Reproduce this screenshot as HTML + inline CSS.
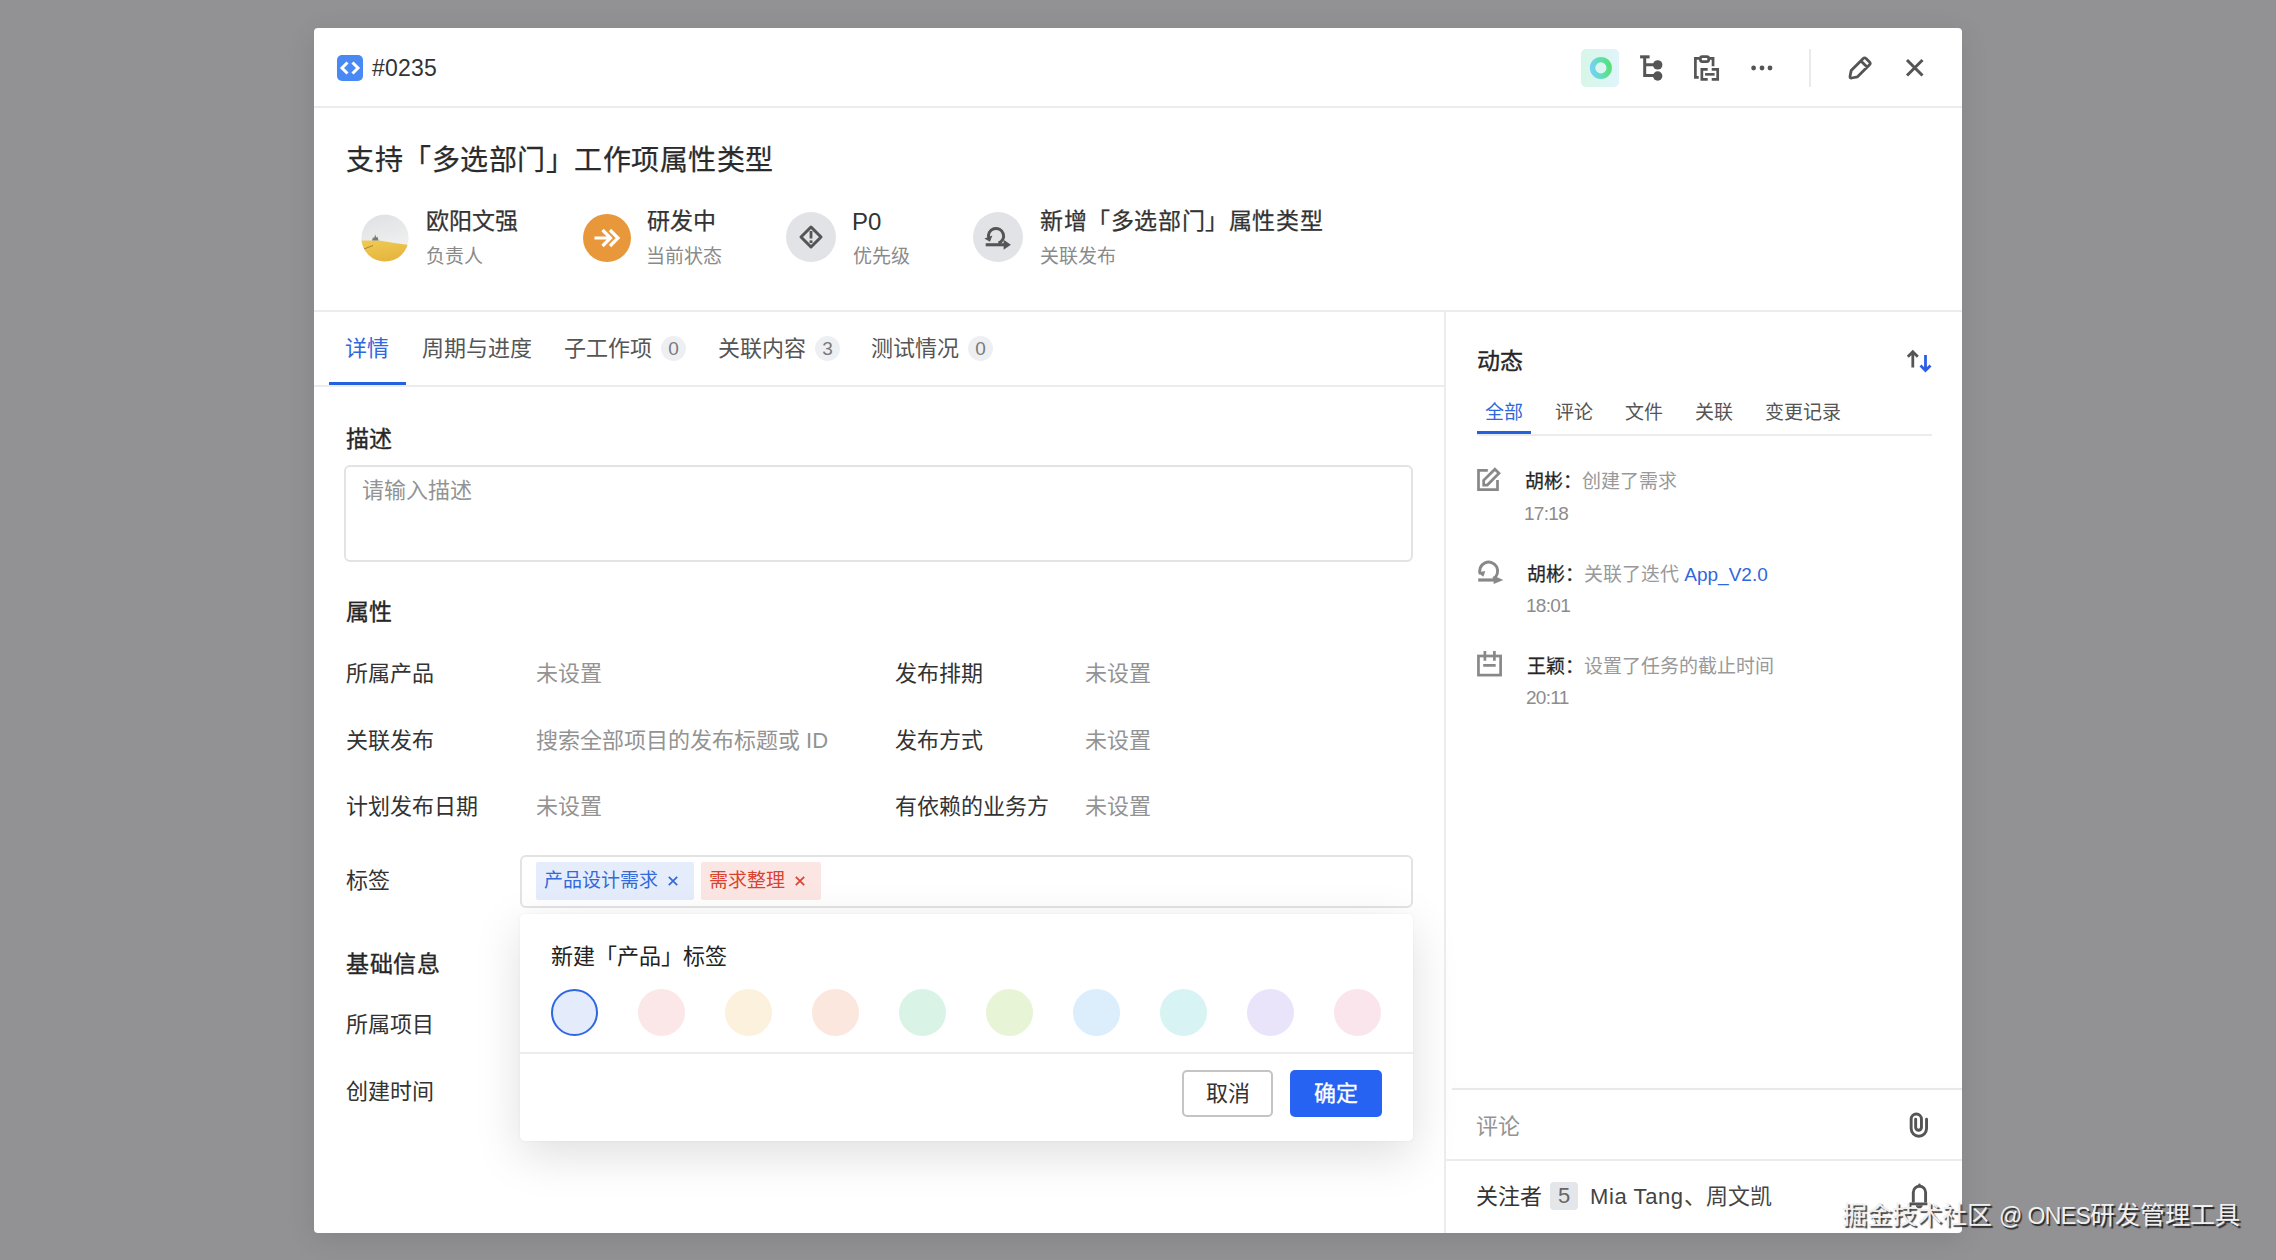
<!DOCTYPE html>
<html lang="zh-CN">
<head>
<meta charset="utf-8">
<title>#0235</title>
<style>
html,body{margin:0;padding:0;}
body{width:2276px;height:1260px;overflow:hidden;background:#929294;position:relative;font-family:"Liberation Sans",sans-serif;color:#303030;}
.a{position:absolute;white-space:nowrap;}
.modal{position:absolute;left:314px;top:28px;width:1648px;height:1205px;background:#fff;border-radius:4px;box-shadow:0 6px 28px rgba(0,0,0,0.10);}
.hl{position:absolute;height:2px;background:#ECECEC;}
.vl{position:absolute;width:2px;background:#ECECEC;}
.t19{font-size:19px;line-height:19px;}
.t20{font-size:20px;line-height:20px;}
.t22{font-size:22px;line-height:22px;}
.t23{font-size:23px;line-height:23px;}
.t24{font-size:24px;line-height:24px;}
.t28{font-size:28px;line-height:28px;}
.dark{color:#333333;}
.gray{color:#8A8A8A;}
.ph{color:#939393;}
.blue{color:#2F67DC;}
.med{-webkit-text-stroke:0.35px currentColor;}
.badge{position:absolute;width:25px;height:25px;border-radius:50%;background:#EEEFF2;color:#7A7A7A;font-size:19px;line-height:25px;text-align:center;}
.dot{position:absolute;width:47px;height:47px;border-radius:50%;top:989px;}
svg{position:absolute;overflow:visible;}
</style>
</head>
<body>
<div class="modal"></div>

<!-- ===== HEADER ===== -->
<div class="a" style="left:337px;top:55px;width:26px;height:26px;background:#4A88F4;border-radius:5px;"></div>
<svg style="left:337px;top:55px" width="26" height="26" viewBox="0 0 26 26"><path d="M10.5 7.5 L5 13 L10.5 18.5 M15.5 7.5 L21 13 L15.5 18.5" fill="none" stroke="#fff" stroke-width="3"/></svg>
<div class="a" style="left:372px;top:55px;font-size:23px;line-height:26px;color:#333;letter-spacing:0.2px;">#0235</div>

<div class="a" style="left:1581px;top:49px;width:38px;height:38px;border-radius:5px;background:linear-gradient(90deg,#D6F7E8,#E0F4FA);"></div>
<svg style="left:1581px;top:49px" width="38" height="38" viewBox="0 0 38 38"><defs><linearGradient id="rg" x1="0" y1="0.6" x2="1" y2="0.4"><stop offset="0" stop-color="#72D3F0"/><stop offset="0.5" stop-color="#62DDB4"/><stop offset="1" stop-color="#58E07E"/></linearGradient></defs><circle cx="19.9" cy="18.9" r="8.3" fill="none" stroke="url(#rg)" stroke-width="5.4"/></svg>

<svg style="left:1634px;top:50px" width="34" height="36" viewBox="0 0 34 36"><path d="M6.1 6.85 H15.6" stroke="#555" stroke-width="3.1" fill="none"/><path d="M10.7 6.85 V25.4 H21 M10.7 14.7 H21" fill="none" stroke="#555" stroke-width="3"/><circle cx="23.7" cy="14.9" r="4.7" fill="#555"/><circle cx="23.7" cy="26" r="4.7" fill="#555"/></svg>

<svg style="left:1688px;top:50px" width="36" height="36" viewBox="0 0 36 36"><path d="M10.7 27.45 H7.4 V8.4 H11.5 M21.6 8.4 H25.05 V16.3" fill="none" stroke="#555" stroke-width="2.7"/><rect x="12.4" y="6.6" width="8.3" height="5" rx="1.8" fill="none" stroke="#555" stroke-width="2.7"/><path d="M19.7 19.45 H13.85 V29.4 H19.7 M23.7 19.45 H29.7 V29.4 H23.7" fill="none" stroke="#555" stroke-width="2.7"/><path d="M17.1 24.35 H26.6" stroke="#555" stroke-width="2.6"/></svg>

<svg style="left:1750px;top:64px" width="24" height="8" viewBox="0 0 24 8"><circle cx="3.6" cy="4" r="2.4" fill="#555"/><circle cx="12" cy="4" r="2.4" fill="#555"/><circle cx="20" cy="4" r="2.4" fill="#555"/></svg>

<div class="vl" style="left:1809px;top:49px;height:38px;background:#EAEAEA;width:2px;"></div>

<svg style="left:1846px;top:54px" width="28" height="28" viewBox="0 0 28 28"><path d="M4 22.5 L5.2 16.5 L17.2 4.5 Q18.6 3.1 20 4.5 L23.5 8 Q24.9 9.4 23.5 10.8 L11.5 22.8 L5.5 24 Q3.8 24.2 4 22.5 Z M15 7 L21 13" fill="none" stroke="#555" stroke-width="2.8" stroke-linejoin="round"/></svg>

<svg style="left:1902px;top:56px" width="24" height="24" viewBox="0 0 24 24"><path d="M5 4 L20.5 19.5 M20.5 4 L5 19.5" fill="none" stroke="#555" stroke-width="3"/></svg>

<div class="hl" style="left:314px;top:106px;width:1648px;"></div>

<!-- ===== TITLE & META ===== -->
<div class="a t28" style="left:346px;top:147px;color:#2B2B2B;letter-spacing:0.5px;-webkit-text-stroke:0.25px #2B2B2B;">支持「多选部门」工作项属性类型</div>

<!-- avatar -->
<svg style="left:361px;top:214px" width="48" height="48" viewBox="0 0 48 48">
<defs>
<clipPath id="ac"><circle cx="24" cy="24" r="23.6"/></clipPath>
<linearGradient id="sky" x1="0" y1="0" x2="0.3" y2="1"><stop offset="0" stop-color="#DDE0E3"/><stop offset="1" stop-color="#F3F3F1"/></linearGradient>
<linearGradient id="fld" x1="0" y1="0" x2="0.4" y2="1"><stop offset="0" stop-color="#EFCB55"/><stop offset="1" stop-color="#E6B53E"/></linearGradient>
</defs>
<g clip-path="url(#ac)">
<rect x="0" y="0" width="48" height="48" fill="url(#sky)"/>
<path d="M0 26.5 L18 26.5 Q32 29 48 31 V48 H0 Z" fill="url(#fld)"/>
<path d="M3 35 L12 31.5" stroke="#A8832F" stroke-width="1" fill="none"/>
<path d="M11 26.5 L12 23 L13 24.5 L14.2 20.5 L15.2 23.5 L16.5 22.8 L17.5 26.5 Z" fill="#7C7772"/>
</g>
</svg>
<div class="a t23 dark" style="-webkit-text-stroke:0.25px #333;left:426px;top:210px;">欧阳文强</div>
<div class="a t19 gray" style="left:426px;top:247px;">负责人</div>

<!-- status -->
<div class="a" style="left:583px;top:214px;width:48px;height:48px;border-radius:50%;background:#E8983A;"></div>
<svg style="left:583px;top:214px" width="48" height="48" viewBox="0 0 48 48"><path d="M11.5 24 H26 M19.5 16 L27.5 24 L19.5 32 M27 16 L35 24 L27 32" fill="none" stroke="#fff" stroke-width="3.2"/></svg>
<div class="a t23 dark" style="-webkit-text-stroke:0.25px #333;left:647px;top:210px;">研发中</div>
<div class="a t19 gray" style="left:646px;top:247px;">当前状态</div>

<!-- priority -->
<div class="a" style="left:786px;top:212px;width:50px;height:50px;border-radius:50%;background:#E2E3E7;"></div>
<svg style="left:786px;top:212px" width="50" height="50" viewBox="0 0 50 50"><path d="M25 15 L35 25 L25 35 L15 25 Z" fill="none" stroke="#555" stroke-width="3" stroke-linejoin="round"/><path d="M25 19 V26.5" stroke="#555" stroke-width="2.8"/><rect x="23.6" y="28.4" width="2.8" height="2.6" fill="#555"/></svg>
<div class="a t24 dark" style="left:852px;top:210px;">P0</div>
<div class="a t19 gray" style="left:853px;top:247px;">优先级</div>

<!-- release -->
<div class="a" style="left:973px;top:212px;width:50px;height:50px;border-radius:50%;background:#E2E3E7;"></div>
<svg style="left:973px;top:212px" width="50" height="50" viewBox="0 0 50 50"><path d="M12.7 32.75 H32" stroke="#555" stroke-width="3.1" fill="none"/><path d="M30.6 27.8 L37.9 32.7 L30.6 37.7 Z" fill="#555"/><path d="M25.45 31.2 A7.6 7.6 0 1 0 15.7 26.1" fill="none" stroke="#555" stroke-width="3"/><path d="M19.4 23.6 L11.4 26.5 L16.9 29.8 Z" fill="#555"/></svg>
<div class="a t23 dark" style="-webkit-text-stroke:0.25px #333;left:1040px;top:210px;letter-spacing:0.6px;">新增「多选部门」属性类型</div>
<div class="a t19 gray" style="left:1040px;top:247px;">关联发布</div>

<div class="hl" style="left:314px;top:310px;width:1648px;"></div>

<!-- ===== LEFT TABS ===== -->
<div class="a t22 blue" style="left:345px;top:338px;">详情</div>
<div class="a t22" style="left:422px;top:338px;color:#555;">周期与进度</div>
<div class="a t22" style="left:564px;top:338px;color:#555;">子工作项</div>
<div class="badge" style="left:661px;top:336px;">0</div>
<div class="a t22" style="left:718px;top:338px;color:#555;">关联内容</div>
<div class="badge" style="left:815px;top:336px;">3</div>
<div class="a t22" style="left:871px;top:338px;color:#555;">测试情况</div>
<div class="badge" style="left:968px;top:336px;">0</div>
<div class="hl" style="left:314px;top:385px;width:1130px;"></div>
<div class="a" style="left:329px;top:382px;width:77px;height:3px;background:#2461E1;"></div>

<!-- ===== DESCRIPTION ===== -->
<div class="a t23 med" style="left:346px;top:428px;color:#262626;">描述</div>
<div class="a" style="left:344px;top:465px;width:1065px;height:93px;border:2px solid #E3E3E3;border-radius:6px;"></div>
<div class="a t22 ph" style="left:362px;top:480px;">请输入描述</div>

<!-- ===== PROPERTIES ===== -->
<div class="a t23 med" style="left:346px;top:601px;color:#262626;">属性</div>
<div class="a t22 dark" style="left:346px;top:663px;">所属产品</div>
<div class="a t22 ph" style="left:536px;top:663px;">未设置</div>
<div class="a t22 dark" style="left:895px;top:663px;">发布排期</div>
<div class="a t22 ph" style="left:1085px;top:663px;">未设置</div>

<div class="a t22 dark" style="left:346px;top:730px;">关联发布</div>
<div class="a t22 ph" style="left:536px;top:730px;">搜索全部项目的发布标题或 ID</div>
<div class="a t22 dark" style="left:895px;top:730px;">发布方式</div>
<div class="a t22 ph" style="left:1085px;top:730px;">未设置</div>

<div class="a t22 dark" style="left:346px;top:796px;">计划发布日期</div>
<div class="a t22 ph" style="left:536px;top:796px;">未设置</div>
<div class="a t22 dark" style="left:895px;top:796px;">有依赖的业务方</div>
<div class="a t22 ph" style="left:1085px;top:796px;">未设置</div>

<div class="a t22 dark" style="left:346px;top:870px;">标签</div>
<div class="a" style="left:520px;top:855px;width:889px;height:49px;border:2px solid #E3E3E3;border-radius:6px;"></div>
<div class="a" style="left:536px;top:862px;width:158px;height:38px;background:#E5EDFC;border-radius:2px;"></div>
<div class="a t19" style="left:544px;top:871px;color:#3369D8;">产品设计需求</div>
<svg style="left:666px;top:874px" width="14" height="14" viewBox="0 0 14 14"><path d="M2.8 2.8 L11.2 11.2 M11.2 2.8 L2.8 11.2" stroke="#3369D8" stroke-width="1.7"/></svg>
<div class="a" style="left:701px;top:862px;width:120px;height:38px;background:#FCE6E4;border-radius:2px;"></div>
<div class="a t19" style="left:709px;top:871px;color:#D9432F;">需求整理</div>
<svg style="left:793px;top:874px" width="14" height="14" viewBox="0 0 14 14"><path d="M2.8 2.8 L11.2 11.2 M11.2 2.8 L2.8 11.2" stroke="#D9432F" stroke-width="1.7"/></svg>

<!-- ===== BASIC INFO ===== -->
<div class="a t23 med" style="left:346px;top:953px;color:#262626;letter-spacing:0.6px;">基础信息</div>
<div class="a t22 dark" style="left:346px;top:1014px;">所属项目</div>
<div class="a t22 dark" style="left:346px;top:1081px;">创建时间</div>

<!-- ===== POPUP ===== -->
<div class="a" style="left:520px;top:914px;width:893px;height:227px;background:#fff;border-radius:5px;box-shadow:0 14px 48px rgba(0,0,0,0.13),0 0 3px rgba(0,0,0,0.05);"></div>
<div class="a t22" style="left:551px;top:946px;color:#222;">新建「产品」标签</div>
<div class="dot" style="left:551px;width:43px;height:43px;background:#E4EBFB;border:2px solid #2D68E0;"></div>
<div class="dot" style="left:638px;background:#FBE7E7;"></div>
<div class="dot" style="left:725px;background:#FCF1DC;"></div>
<div class="dot" style="left:812px;background:#FCE7DE;"></div>
<div class="dot" style="left:899px;background:#D9F4E7;"></div>
<div class="dot" style="left:986px;background:#E8F4D6;"></div>
<div class="dot" style="left:1073px;background:#DCEEFC;"></div>
<div class="dot" style="left:1160px;background:#D8F3F4;"></div>
<div class="dot" style="left:1247px;background:#EAE4FA;"></div>
<div class="dot" style="left:1334px;background:#FBE5EC;"></div>
<div class="hl" style="left:520px;top:1052px;width:893px;"></div>
<div class="a" style="left:1182px;top:1070px;width:87px;height:43px;border:2px solid #C4C4C4;border-radius:5px;"></div>
<div class="a t22" style="left:1206px;top:1083px;color:#333;">取消</div>
<div class="a" style="left:1290px;top:1070px;width:92px;height:47px;background:#2763F3;border-radius:5px;"></div>
<div class="a t22 med" style="left:1314px;top:1083px;color:#fff;-webkit-text-stroke:0.3px #fff;">确定</div>

<!-- ===== RIGHT PANEL ===== -->
<div class="vl" style="left:1444px;top:311px;height:922px;"></div>
<div class="a t23 med" style="left:1477px;top:350px;color:#262626;">动态</div>
<svg style="left:1905px;top:348px" width="28" height="26" viewBox="0 0 28 26"><path d="M7.8 19.5 V4 M2.8 8.8 L7.8 3.8 L12.8 8.8" fill="none" stroke="#555" stroke-width="2.8"/><path d="M20.5 7 V22.5 M15.5 17.5 L20.5 22.5 L25.5 17.5" fill="none" stroke="#2D5FE6" stroke-width="2.8"/></svg>

<div class="a t19 blue" style="left:1485px;top:403px;">全部</div>
<div class="a t19" style="left:1555px;top:403px;color:#555;">评论</div>
<div class="a t19" style="left:1625px;top:403px;color:#555;">文件</div>
<div class="a t19" style="left:1695px;top:403px;color:#555;">关联</div>
<div class="a t19" style="left:1765px;top:403px;color:#555;">变更记录</div>
<div class="hl" style="left:1477px;top:434px;width:455px;"></div>
<div class="a" style="left:1477px;top:431px;width:54px;height:3px;background:#2461E1;"></div>

<!-- item 1 -->
<svg style="left:1472px;top:462px" width="34" height="34" viewBox="0 0 34 34"><path d="M15.8 8.4 H6.5 V27.6 H25.5 V18.1" fill="none" stroke="#888" stroke-width="2.7"/><path d="M11.65 23.05 V18.4 L22.9 7.2 L27 11.3 L15.3 23.05 Z" fill="none" stroke="#888" stroke-width="2.7" stroke-linejoin="miter"/></svg>
<div class="a t19" style="left:1525px;top:472px;color:#262626;-webkit-text-stroke:0.25px #262626;">胡彬：</div>
<div class="a t19" style="left:1582px;top:472px;color:#999;">创建了需求</div>
<div class="a t19" style="left:1524px;top:504px;color:#8C8C8C;letter-spacing:-0.7px;">17:18</div>

<!-- item 2 -->
<svg style="left:1472px;top:555px" width="36" height="34" viewBox="0 0 36 34"><path d="M6.2 25 H23.5" stroke="#888" stroke-width="3.2" fill="none"/><path d="M21.6 20.8 L31.4 24.9 L21.6 29 Z" fill="#888"/><path d="M21.2 23.8 A9 9 0 1 0 8.3 19.3" fill="none" stroke="#888" stroke-width="2.9"/><path d="M5.8 17.4 L13.3 15.9 L11.4 21.8 Z" fill="#888"/></svg>
<div class="a t19" style="left:1527px;top:565px;color:#262626;-webkit-text-stroke:0.25px #262626;">胡彬：</div>
<div class="a t19" style="left:1584px;top:565px;color:#999;">关联了迭代 <span style="color:#2F67DC">App_V2.0</span></div>
<div class="a t19" style="left:1526px;top:596px;color:#8C8C8C;letter-spacing:-0.7px;">18:01</div>

<!-- item 3 -->
<svg style="left:1472px;top:646px" width="34" height="34" viewBox="0 0 34 34"><rect x="6.45" y="10" width="22.15" height="19.1" fill="none" stroke="#888" stroke-width="2.7"/><path d="M12.9 5.1 V14.7 M22.4 5.1 V14.7 M11.2 19.4 H23.7" stroke="#888" stroke-width="2.7" fill="none"/></svg>
<div class="a t19" style="left:1527px;top:657px;color:#262626;-webkit-text-stroke:0.25px #262626;">王颖：</div>
<div class="a t19" style="left:1584px;top:657px;color:#999;">设置了任务的截止时间</div>
<div class="a t19" style="left:1526px;top:688px;color:#8C8C8C;letter-spacing:-0.7px;">20:11</div>

<!-- comment & followers -->
<div class="a" style="left:1452px;top:1088px;width:510px;height:2px;background:#E9E9E9;box-shadow:0 -2px 6px rgba(0,0,0,0.03);"></div>
<div class="a t22 ph" style="left:1476px;top:1116px;">评论</div>
<svg style="left:1902px;top:1106px" width="34" height="38" viewBox="0 0 34 38"><path d="M13.65 13.3 V21.3 A2.9 2.9 0 0 0 19.45 21.3 V13.1 A5.15 5.15 0 0 0 9.15 13.1 V22.55 A7.7 7.7 0 0 0 24.55 22.55 V13.3" fill="none" stroke="#555" stroke-width="2.9" stroke-linecap="round"/></svg>
<div class="hl" style="left:1445px;top:1159px;width:517px;"></div>
<div class="a t22 dark" style="left:1476px;top:1186px;">关注者</div>
<div class="a" style="left:1550px;top:1182px;width:28px;height:28px;border-radius:4px;background:#E5E6EA;color:#666;font-size:22px;line-height:28px;text-align:center;">5</div>
<div class="a t22" style="left:1590px;top:1186px;color:#444;"><span style="letter-spacing:0.6px">Mia Tang</span>、周文凯</div>
<svg style="left:1902px;top:1178px" width="34" height="34" viewBox="0 0 34 34"><path d="M11.3 24.5 V14.4 A6.15 6.15 0 0 1 23.6 14.4 V24.5" fill="none" stroke="#555" stroke-width="2.9"/><path d="M7.3 25.9 H25.4" stroke="#555" stroke-width="2.8"/><circle cx="17.45" cy="6.9" r="1.3" fill="#555"/><path d="M13.6 27.2 H20.9 Q20.3 30.3 17.25 30.3 Q14.2 30.3 13.6 27.2 Z" fill="#555"/></svg>

<!-- watermark -->
<div class="a" style="left:1842px;top:1201px;font-size:25px;line-height:28px;color:#F0F0F0;text-shadow:1.5px 1.5px 1px rgba(0,0,0,0.75);">掘金技术社区 <span style="font-size:23px;letter-spacing:-0.6px">@ ONES</span>研发管理工具</div>

</body>
</html>
